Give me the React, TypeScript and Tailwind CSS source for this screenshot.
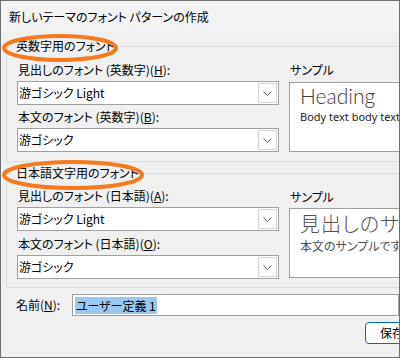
const jp = "font-['Yu_Gothic_UI','Noto_Sans_CJK_JP',sans-serif] [font-feature-settings:'palt']";

function Combo({ value }: { value: string }) {
  return (
    <div className="mt-[3px] flex h-[24px] w-[262px] items-center border border-[#a0a0a0] bg-white">
      <div className="flex-1 pl-[1px] text-[12px] leading-[16px] text-black">{value}</div>
      <div className="mr-[1px] flex h-[20px] w-[19px] items-center justify-center border border-[#d4d4d4] bg-[#fbfbfb]">
        <svg width="9" height="5" viewBox="0 0 9 5">
          <polyline points="0.5,0.5 4.5,4.5 8.5,0.5" fill="none" stroke="#606060" strokeWidth="1" />
        </svg>
      </div>
    </div>
  );
}

function Label({ text, acc, className }: { text: string; acc: string; className: string }) {
  return (
    <div className={"pl-[1px] text-[12px] leading-[16px] text-black " + className}>
      {text}(<span className="underline">{acc}</span>):
    </div>
  );
}

export default function App() {
  return (
    <div className={"relative h-[358px] w-[400px] overflow-hidden border border-[#6f6f6f] bg-[#f0f0f0] " + jp}>
      <div className="flex h-[31px] items-center bg-[#f3f3f3] pl-[8px] text-[12px] text-black">
        新しいテーマのフォント パターンの作成
      </div>

      <fieldset className="ml-[5px] mt-[6px] w-[430px] border border-[#dcdcdc] pb-[9px] pl-[10px]">
        <legend className="ml-[-5px] px-[4px] text-[12px] leading-[16px] text-black">英数字用のフォント</legend>
        <div className="flex">
          <div className="w-[262px]">
            <Label text="見出しのフォント (英数字)" acc="H" className="mt-[8px]" />
            <Combo value="游ゴシック Light" />
            <Label text="本文のフォント (英数字)" acc="B" className="mt-[4px]" />
            <div className="mt-[1px]">
              <Combo value="游ゴシック" />
            </div>
          </div>
          <div className="ml-[10px] w-[130px]">
            <div className="mt-[8px] pl-[1px] text-[12px] leading-[16px] text-black">サンプル</div>
            <div className="mt-[4px] h-[70px] overflow-hidden whitespace-nowrap border border-[#a0a0a0] bg-white pl-[10px]">
              <div className="mt-[1px] font-['Lato','Noto_Sans',sans-serif] text-[21px] font-light leading-[24px] text-[#3c3c3c]">
                Heading
              </div>
              <div className="mt-[2px] font-['Noto_Sans','Open_Sans',sans-serif] text-[11px] leading-[14px] text-[#222]">
                Body text body text body text.
              </div>
            </div>
          </div>
        </div>
      </fieldset>

      <fieldset className="ml-[5px] mt-[3px] w-[430px] border border-[#dcdcdc] pb-[8px] pl-[10px]">
        <legend className="ml-[-5px] px-[4px] text-[12px] leading-[16px] text-black">日本語文字用のフォント</legend>
        <div className="flex">
          <div className="w-[262px]">
            <Label text="見出しのフォント (日本語)" acc="A" className="mt-[7px]" />
            <div className="mt-[1px]">
              <Combo value="游ゴシック Light" />
            </div>
            <Label text="本文のフォント (日本語)" acc="O" className="mt-[5px]" />
            <Combo value="游ゴシック" />
          </div>
          <div className="ml-[10px] w-[130px]">
            <div className="mt-[8px] pl-[1px] text-[12px] leading-[16px] text-black">サンプル</div>
            <div className="mt-[3px] h-[70px] overflow-hidden whitespace-nowrap border border-[#a0a0a0] bg-white pl-[10px]">
              <div className="mt-[2px] text-[20px] font-light leading-[26px] tracking-[1px] text-[#505050]">
                見出しのサンプルです
              </div>
              <div className="mt-[1px] text-[12px] leading-[16px] text-[#505050]">本文のサンプルです。</div>
            </div>
          </div>
        </div>
      </fieldset>

      <div className="mt-[6px] flex items-center pl-[15px]">
        <div className="w-[58px] text-[12px] leading-[16px] text-black">
          名前(<span className="underline">N</span>):
        </div>
        <div className="flex h-[22px] w-[340px] items-center border border-[#a0a0a0] bg-white pl-[2px]">
          <span className="bg-[#99c9ef] px-[1px] text-[12px] leading-[17px] text-black">ユーザー定義 1</span>
        </div>
      </div>

      <div className="mt-[6px] flex pl-[364px]">
        <div className="flex h-[22px] w-[75px] shrink-0 items-center rounded-[4px] border border-[#0067c0] bg-[#fdfdfd] pl-[14px] text-[12px] text-black">
          保存
        </div>
      </div>

      <svg className="pointer-events-none absolute left-0 top-0" width="400" height="358">
        <ellipse cx="59" cy="47" rx="56" ry="12" fill="none" stroke="#f47a1f" strokeWidth="4" />
        <ellipse cx="72" cy="174" rx="69" ry="13" fill="none" stroke="#f47a1f" strokeWidth="4" />
      </svg>
    </div>
  );
}
